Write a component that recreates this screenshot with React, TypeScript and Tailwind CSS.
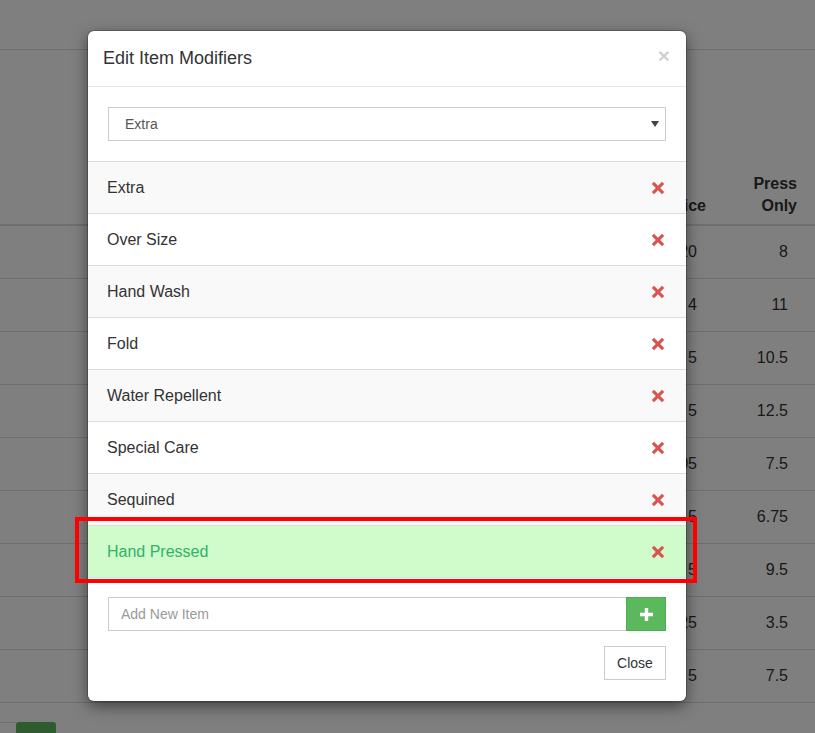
import React from "react";

const modifiers = [
  "Extra",
  "Over Size",
  "Hand Wash",
  "Fold",
  "Water Repellent",
  "Special Care",
  "Sequined",
  "Hand Pressed",
];

const tableRows = [
  ["20", "8"],
  ["4", "11"],
  ["5", "10.5"],
  ["5", "12.5"],
  ["05", "7.5"],
  ["5", "6.75"],
  ["5", "9.5"],
  ["25", "3.5"],
  ["5", "7.5"],
];

function RemoveIcon() {
  return (
    <svg width="14" height="14" viewBox="0 0 14 14" className="shrink-0">
      <path
        d="M3 0.8 L7 4.8 L11 0.8 L13.2 3 L9.2 7 L13.2 11 L11 13.2 L7 9.2 L3 13.2 L0.8 11 L4.8 7 L0.8 3 Z"
        fill="#d9534f"
      />
    </svg>
  );
}

function PlusIcon() {
  return (
    <svg width="13" height="13" viewBox="0 0 13 13">
      <path d="M4.8 0 H8.2 V4.8 H13 V8.2 H8.2 V13 H4.8 V8.2 H0 V4.8 H4.8 Z" fill="#fff" />
    </svg>
  );
}

function App() {
  return (
    <div
      className="relative w-[815px] h-[733px] overflow-hidden bg-white text-[#333]"
      style={{ fontFamily: '"Liberation Sans", Arial, sans-serif' }}
    >
      {/* page behind the dialog */}
      <div className="h-[50px] border-b border-[#ddd]" />
      <div className="pt-[111px]">
        <div className="flex h-[65px] items-end border-b-2 border-[#ddd] pb-[7px] font-bold text-[16px] leading-[22px]">
          <div className="flex-1" />
          <div className="w-[119px] pr-[9px] text-right">Price</div>
          <div className="w-[100px] pr-[18px] text-right">
            Press
            <br />
            Only
          </div>
        </div>
        {tableRows.map(([price, press], i) => (
          <div key={i} className="flex h-[53px] items-center border-b border-[#ddd] text-[16px]">
            <div className="flex-1" />
            <div className="w-[119px] pr-[18px] text-right">{price}</div>
            <div className="w-[100px] pr-[27px] text-right">{press}</div>
          </div>
        ))}
        <div className="flex items-end pt-[19px]">
          <div className="w-[16px] border-t border-[#ddd] self-start" />
          <div className="h-[40px] w-[40px] rounded-t-[3px] bg-[#5cb85c]" />
        </div>
      </div>

      {/* backdrop */}
      <div className="absolute inset-0 bg-black/50" />

      {/* dialog */}
      <div className="absolute left-[88px] top-[31px] w-[598px] rounded-[6px] bg-white shadow-[0_0_0_1px_rgba(0,0,0,0.2),0_5px_15px_rgba(0,0,0,0.5)]">
        <div className="flex h-[56px] items-center justify-between border-b border-[#e5e5e5] pl-[15px] pr-[16px]">
          <h4 className="text-[18px] text-[#333]">Edit Item Modifiers</h4>
          <span className="-mt-[6px] text-[21px] font-bold leading-none text-black/20">×</span>
        </div>

        <div className="border-b border-[#ddd] px-[20px] py-[20px]">
          <div className="flex h-[34px] items-center justify-between border border-[#ccc] pl-[16px] pr-[6px] text-[14px] text-[#555]">
            <span>Extra</span>
            <svg width="8" height="6" viewBox="0 0 8 6">
              <path d="M0 0 H8 L4 6 Z" fill="#444" />
            </svg>
          </div>
        </div>

        <div>
          {modifiers.map((name, i) => {
            const active = name === "Hand Pressed";
            return (
              <div
                key={name}
                className={`relative flex h-[52px] items-center justify-between border-b border-[#ddd] pl-[19px] pr-[21px] text-[16px] ${
                  active ? "bg-[#d0fccb] text-[#2eb367]" : i % 2 === 0 ? "bg-[#f9f9f9]" : "bg-white"
                }`}
              >
                <span>{name}</span>
                <RemoveIcon />
                {active && (
                  <div className="pointer-events-none absolute -left-[13px] -right-[11px] -top-[9px] -bottom-[6px] border-4 border-[#ff0000]" />
                )}
              </div>
            );
          })}
        </div>

        <div className="px-[20px] pt-[19px] pb-[21px]">
          <div className="flex h-[34px]">
            <div className="flex flex-1 items-center border border-r-0 border-[#ccc] pl-[12px] text-[14px] text-[#999]">
              Add New Item
            </div>
            <div className="flex w-[40px] items-center justify-center border border-[#4cae4c] bg-[#5cb85c]">
              <PlusIcon />
            </div>
          </div>
          <div className="flex justify-end pt-[15px]">
            <div className="flex h-[34px] w-[62px] items-center justify-center border border-[#ccc] text-[14px] text-[#333]">
              Close
            </div>
          </div>
        </div>
      </div>
    </div>
  );
}

export default App;
